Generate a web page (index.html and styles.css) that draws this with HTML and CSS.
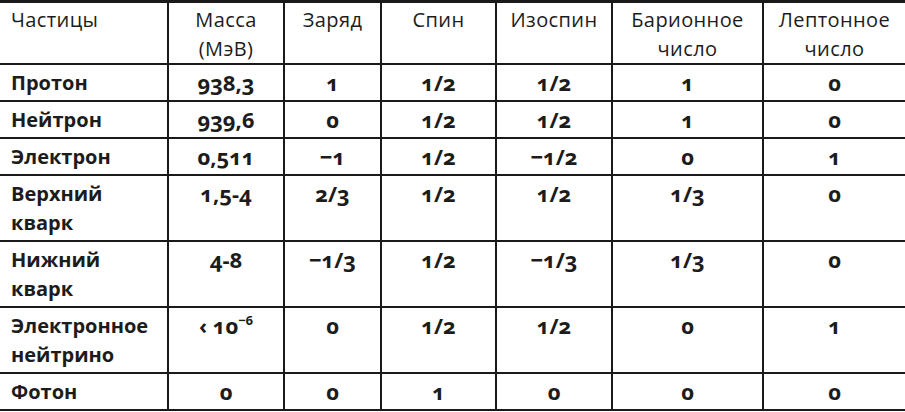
FILE: index.html
```html
<!DOCTYPE html>
<html lang="ru">
<head>
<meta charset="utf-8">
<link rel="stylesheet" href="styles.css">
</head>
<body>
<table class="tbl">
  <colgroup>
    <col class="c1"><col class="c2"><col class="c3"><col class="c4"><col class="c5"><col class="c6"><col class="c7">
  </colgroup>
  <thead>
    <tr>
      <th class="name">Частицы</th>
      <th>Масса<br>(МэВ)</th>
      <th>Заряд</th>
      <th>Спин</th>
      <th>Изоспин</th>
      <th>Барионное<br>число</th>
      <th>Лептонное<br>число</th>
    </tr>
  </thead>
  <tbody>
    <tr><td class="name">Протон</td><td>938,3</td><td>1</td><td>1/2</td><td>1/2</td><td>1</td><td>0</td></tr>
    <tr><td class="name">Нейтрон</td><td>939,6</td><td>0</td><td>1/2</td><td>1/2</td><td>1</td><td>0</td></tr>
    <tr><td class="name">Электрон</td><td>0,511</td><td>−1</td><td>1/2</td><td>−1/2</td><td>0</td><td>1</td></tr>
    <tr><td class="name">Верхний<br>кварк</td><td>1,5-4</td><td>2/3</td><td>1/2</td><td>1/2</td><td>1/3</td><td>0</td></tr>
    <tr><td class="name">Нижний<br>кварк</td><td>4-8</td><td>−1/3</td><td>1/2</td><td>−1/3</td><td>1/3</td><td>0</td></tr>
    <tr><td class="name">Электронное<br>нейтрино</td><td>‹ 10<sup>−6</sup></td><td>0</td><td>1/2</td><td>1/2</td><td>0</td><td>1</td></tr>
    <tr><td class="name">Фотон</td><td>0</td><td>0</td><td>1</td><td>0</td><td>0</td><td>0</td></tr>
  </tbody>
</table>
</body>
</html>
```

FILE: styles.css
```css
html, body {
  margin: 0;
  padding: 0;
  background: #ffffff;
}
body {
  font-family: "Open Sans", "Noto Sans", "DejaVu Sans", sans-serif;
  color: #1c1c1c;
}
.tbl {
  width: 905px;
  border-collapse: collapse;
  table-layout: fixed;
  border-top: 3px solid #1a1a1a;
  border-bottom: 2px solid #1a1a1a;
}
.c1 { width: 168px; }
.c2 { width: 116px; }
.c3 { width: 97px; }
.c4 { width: 115px; }
.c5 { width: 116px; }
.c6 { width: 151px; }
.c7 { width: 142px; }
.tbl th, .tbl td {
  border-left: 2px solid #1a1a1a;
  border-top: 2px solid #1a1a1a;
  padding: 3px 2px;
  line-height: 29px;
  vertical-align: top;
  text-align: center;
  white-space: nowrap;
}
.tbl th {
  font-weight: 500;
  font-size: 20px;
  letter-spacing: 0.4px;
  padding-top: 2px;
  padding-bottom: 0;
}
.tbl td {
  font-weight: 700;
  font-size: 22px;
  font-variant-numeric: oldstyle-nums;
}
.tbl th:first-child, .tbl td:first-child {
  border-left: none;
}
.tbl .name {
  text-align: left;
  padding-left: 11px;
}
.tbl td.name {
  font-size: 20px;
}
.tbl sup {
  font-size: 13px;
  line-height: 0;
  vertical-align: 9px;
}
```
